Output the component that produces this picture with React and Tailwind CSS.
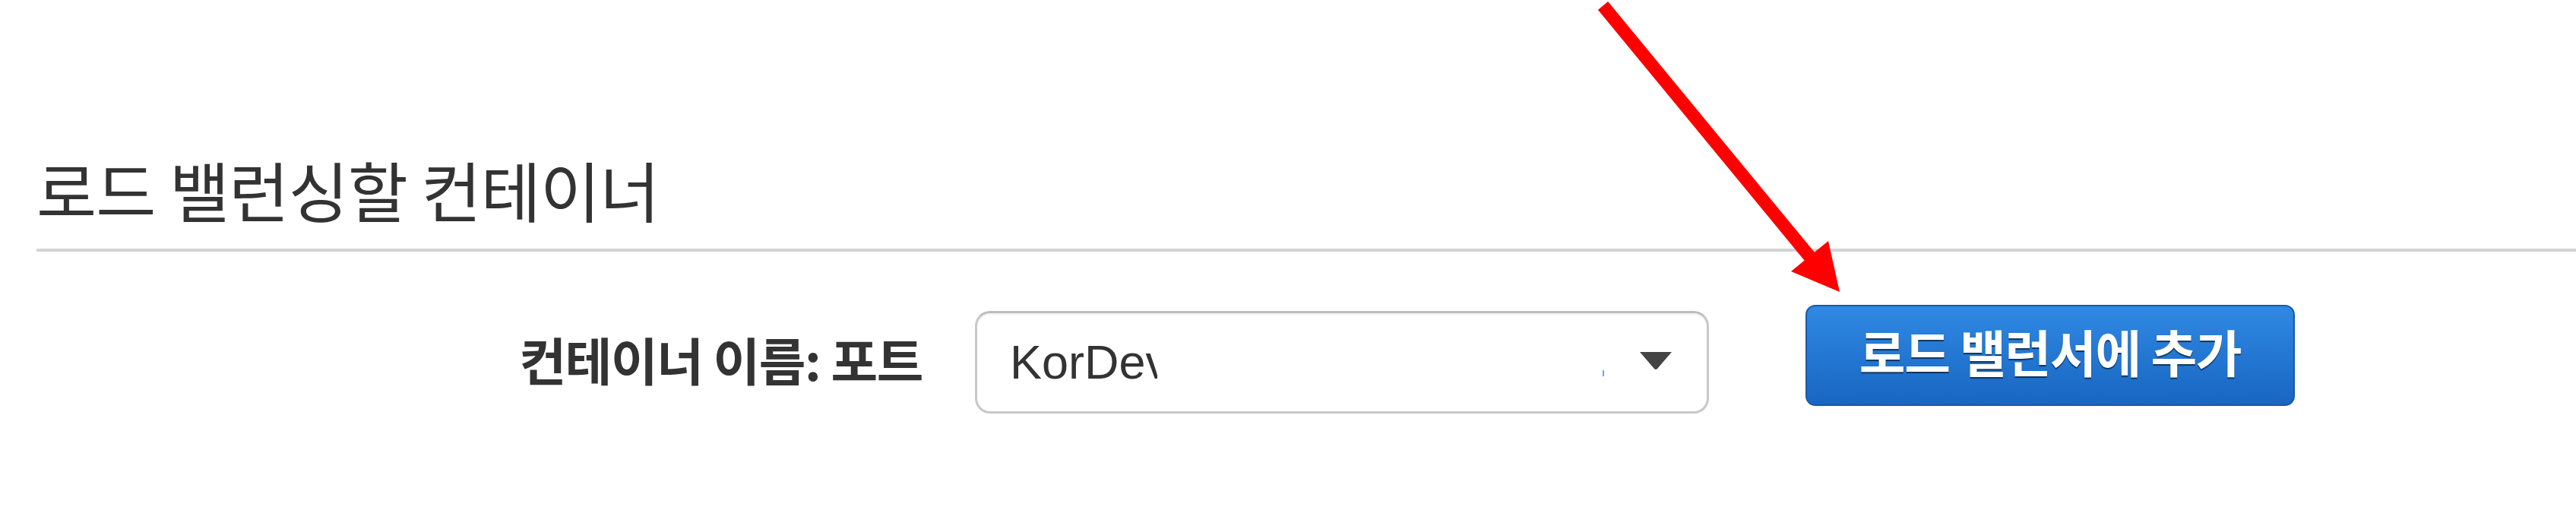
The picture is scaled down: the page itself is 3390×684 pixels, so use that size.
import React from 'react';

const sans = { fontFamily: '"Noto Sans CJK KR", "Noto Sans", sans-serif' };

const App = () => {
  return (
    <div className="relative h-[684px] w-[3390px] overflow-hidden bg-white">
      {/* Section title */}
      <div className="pl-[48px] pt-[206px]">
        <h2
          className="text-[86px] leading-none font-normal tracking-[-0.01em] text-[#333333]"
          style={sans}
        >
          로드 밸런싱할 컨테이너
        </h2>
      </div>
      <div className="ml-[48px] mt-[35px] h-[4px] bg-[#d4d4d4]" />

      {/* Container row */}
      <div className="mt-[70px] flex items-start">
        <div
          className="mt-[37px] w-[1214px] text-right text-[67px] leading-none font-bold tracking-[-0.02em] text-[#333333]"
          style={sans}
        >
          컨테이너 이름: 포트
        </div>

        <div className="ml-[69px] mt-[8px] flex h-[135px] w-[966px] items-center rounded-[20px] border-[3px] border-[#c8c8c8] border-t-[#bdbdbd] bg-white pl-[43px] pr-[45px] shadow-[inset_0_2px_2px_rgba(0,0,0,0.06)]">
          <div className="w-[194px] overflow-hidden whitespace-nowrap text-[63px] leading-none text-[#333333] font-['Liberation_Sans',Arial,sans-serif]">
            KorDev
          </div>
          <div className="flex-1" />
          <div className="mt-[28px] h-[8px] w-[2px] bg-[#5aaeff]" />
          <svg className="ml-[46px] mt-[-4px]" width="44" height="25" viewBox="0 0 44 25">
            <path d="M1 1 H43 L24 23 Q22 25 20 23 Z" fill="#444444" />
          </svg>
        </div>

        <button
          className="ml-[127px] flex h-[133px] w-[644px] items-center justify-center rounded-[13px] border-[2px] border-[#1a5aa8] bg-gradient-to-b from-[#3089e3] to-[#1766c2] pb-[14px] text-[66px] leading-none font-bold tracking-[-0.02em] text-white [text-shadow:0_2px_1px_rgba(0,0,0,0.55)]"
          style={sans}
        >
          로드 밸런서에 추가
        </button>
      </div>

      {/* Annotation arrow */}
      <svg className="absolute left-0 top-0" width="3390" height="684" viewBox="0 0 3390 684">
        <line x1="2109.5" y1="7.5" x2="2386" y2="343" stroke="#ff0000" strokeWidth="17" />
        <polygon points="2357,357 2406,317 2421,384" fill="#ff0000" />
      </svg>
    </div>
  );
};

export default App;
